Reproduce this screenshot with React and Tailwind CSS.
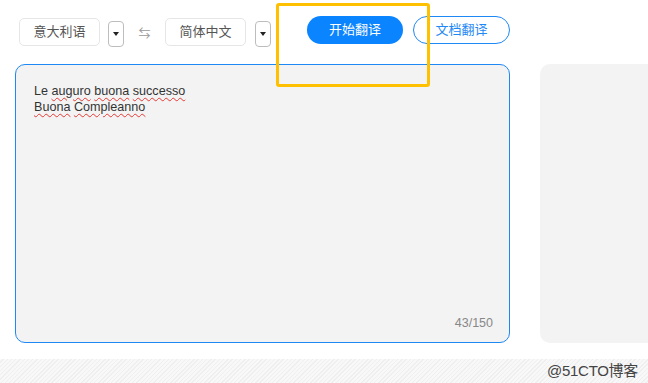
import React from 'react';

const FONT = "font-['Liberation_Sans','Noto_Sans_CJK_SC',sans-serif]";

const LangBox = ({ label }) => (
  <div className="w-[81px] h-[28px] mt-[2px] rounded-[5px] border border-[#e6e6e6] bg-white flex items-center justify-center text-[13px] text-[#555]">
    {label}
  </div>
);

const Caret = () => (
  <div className="w-[16px] h-[26px] mt-[5px] rounded-[4px] border border-[#bdbdbd] bg-white flex items-center justify-center">
    <span className="block w-0 h-0 border-l-[3.5px] border-r-[3.5px] border-t-[4px] border-l-transparent border-r-transparent border-t-[#222]" />
  </div>
);

const Misspelled = ({ children }) => (
  <span className="underline decoration-wavy decoration-[#e53935] decoration-[1px] underline-offset-[2px]">{children}</span>
);

export default function App() {
  return (
    <div className={`${FONT} relative w-[648px] h-[383px] bg-white overflow-hidden`}>
      {/* toolbar */}
      <div className="flex items-start pl-[19px] pt-[16px] h-[64px]">
        <LangBox label="意大利语" />
        <div className="ml-[8px]">
          <Caret />
        </div>
        <div className="w-[41px] mt-[9px] text-center text-[12px] text-[#999]">⇆</div>
        <LangBox label="简体中文" />
        <div className="ml-[9px]">
          <Caret />
        </div>
        <button className="ml-[36px] w-[96px] h-[28px] rounded-full bg-[#0a84ff] text-white text-[13px]">
          开始翻译
        </button>
        <button className="ml-[10px] w-[97px] h-[28px] rounded-full border border-[#1e88f5] bg-white text-[#1e88f5] text-[13px]">
          文档翻译
        </button>
      </div>

      {/* panels */}
      <div className="flex pl-[15px] gap-[30px]">
        <div className="relative shrink-0 w-[495px] h-[279px] rounded-[10px] border border-[#1e88f5] bg-[#f3f3f3] px-[18px] pt-[18px] text-[12.6px] leading-[16px] text-[#333]">
          <div>
            Le <Misspelled>auguro</Misspelled> <Misspelled>buona</Misspelled> <Misspelled>successo</Misspelled>
          </div>
          <div>
            <Misspelled>Buona</Misspelled> <Misspelled>Compleanno</Misspelled>
          </div>
          <div className="absolute right-[16px] bottom-[11px] text-[12.5px] text-[#888]">43/150</div>
        </div>
        <div className="shrink-0 w-[140px] h-[279px] rounded-[10px] bg-[#f3f3f3]" />
      </div>

      {/* hatched footer */}
      <div className="absolute left-0 right-0 bottom-0 h-[24px] bg-[repeating-linear-gradient(135deg,#f8f8f8_0px,#f8f8f8_2px,#efefef_2px,#efefef_3px)] flex items-center justify-end pr-[10px]">
        <span className="text-[15px] text-[#444] tracking-[-0.3px]">@51CTO博客</span>
      </div>

      {/* annotation highlight */}
      <div className="absolute left-[276px] top-[3px] w-[154px] h-[84px] border-[3px] border-[#ffc000] rounded-[3px]" />
    </div>
  );
}
